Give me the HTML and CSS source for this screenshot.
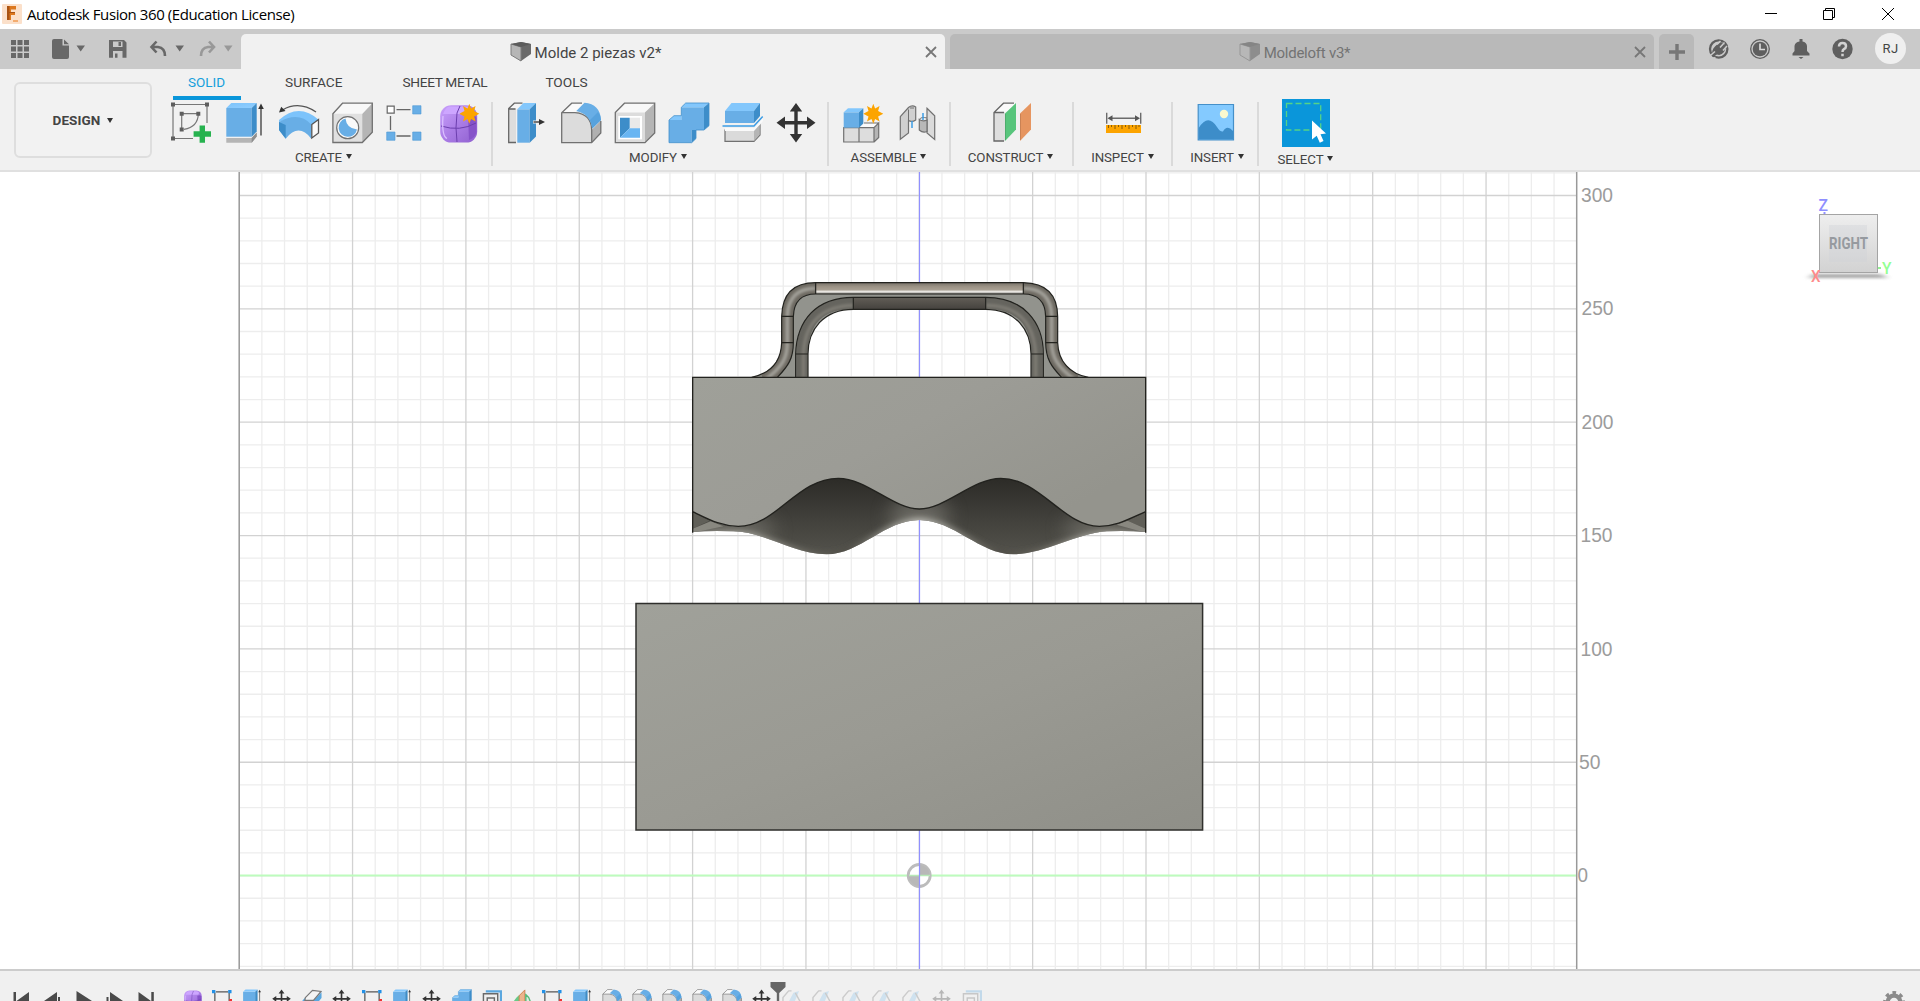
FILE: index.html
```html
<!DOCTYPE html>
<html lang="en">
<head>
<meta charset="utf-8">
<title>Autodesk Fusion 360 (Education License)</title>
<link rel="stylesheet" href="styles.css">
</head>
<body>
<svg class="sprites" width="0" height="0" aria-hidden="true">
  <defs>
    <linearGradient id="blueTop" x1="0" y1="0" x2="1" y2="1"><stop offset="0" stop-color="#7cc3fb"/><stop offset="1" stop-color="#8fceff"/></linearGradient>
    <linearGradient id="purple" x1="0" y1="0" x2="1" y2="1"><stop offset="0" stop-color="#c9a1fb"/><stop offset=".5" stop-color="#ab7de6"/><stop offset="1" stop-color="#8f60cf"/></linearGradient>
    <symbol id="i-sketch" viewBox="0 0 42 42">
      <path d="M3 2.500H37V21M3 2.500V36.500H23" fill="none" stroke="#777" stroke-width="1.200"/><path d="M11.700 27V11.700H28.300Q28 25 14 27.300" fill="none" stroke="#777" stroke-width="1.200"/>
      <path d="M1 .6h4v4h-4zM35 .6h4v4h-4zM1 34.500h4v4h-4zM9.700 9.700h4v4h-4zM26.300 9.700h4v4h-4zM9.700 25.600h4v4h-4z" fill="#5e5e5e"/>
      <path d="M29.600 23.500h5.400v5.800h6v5.400h-6v6h-5.400v-6h-6v-5.400h6z" fill="#27b24f"/>
    </symbol>
    <symbol id="i-extrude" viewBox="0 0 42 42">
      <path d="M2.300 36H27.700L32.700 30.500V34.500L27.700 40.800H2.300z" fill="#b5b5b5"/><path d="M27.700 36 32.700 30.500V34.500L27.700 40.800z" fill="#8e8e8e"/>
      <path d="M2.300 6H27.700V34.700H2.300z" fill="#68aee6"/><path d="M2.300 6 7.300 1H32.700L27.700 6z" fill="url(#blueTop)"/><path d="M27.700 6 32.700 1V29.500L27.700 34.700z" fill="#3d8dc9"/>
      <path d="M37 5V33.500" stroke="#3a3a3a" stroke-width="1.300"/><path d="M37 1.500 39.800 7H34.200z" fill="#333"/>
    </symbol>
    <symbol id="i-revolve" viewBox="0 0 42 42">
      <path d="M1 18Q20.700 0 41 18L33.300 23Q20.700 11 1 20z" fill="#7cc3fb"/><path d="M1 20Q20.700 9 33.300 22.500V36.700Q20.700 20.500 7.700 36.700L1 28z" fill="#68aee6"/><path d="M1 20 7.700 23V36.700L1 28z" fill="#3d8dc9"/>
      <path d="M33.800 22.500 40.500 17.500V31L33.800 36z" fill="#fafafa" stroke="#555" stroke-width="1.300"/>
      <path d="M4.500 8Q20.700-1.500 38 10" fill="none" stroke="#555" stroke-width="1.300"/><path d="M1 10.500 3.200 4.800 7.500 9z" fill="#333"/>
    </symbol>
    <symbol id="i-hole" viewBox="0 0 42 42">
      <path d="M.9 11.700 10.500 1.200H40.300V30.300L30.300 40.500H.9z" fill="#e0e0e0"/><path d="M30.300 11.700 40.300 1.200V30.300L30.300 40.500z" fill="#b5b5b5"/><path d="M1 11.700 10.500 1.200H40.300L30.300 11.700z" fill="#f8f8f8"/><path d="M.9 11.700 10.500 1.200H40.300V30.300L30.300 40.500H.9z" fill="none" stroke="#717171" stroke-width="1.300"/>
      <circle cx="15.700" cy="25.700" r="11" fill="#fafafa" stroke="#717171" stroke-width="1.200"/><path d="M13.500 16.500Q14.500 26.500 25 27.500A9.300 9.300 0 1 1 13.500 16.500z" fill="#68aee6"/>
    </symbol>
    <symbol id="i-pattern" viewBox="0 0 42 42">
      <path d="M10.500 7.700H24.500M4.500 14V28M10.500 34H24.500" stroke="#666" stroke-width="1.300"/><path d="M1.200 4.200h7v7h-7z" fill="#fff" stroke="#666" stroke-width="1.200"/><path d="M26.700 3.700h8.300v8.300h-8.300zM.7 30h8.300v8.300h-8.300zM26.700 30h8.300v8.300h-8.300z" fill="#68aee6" stroke="#4d98d5" stroke-width=".6"/>
    </symbol>
    <symbol id="i-form" viewBox="0 0 42 42">
      <rect x=".2" y="3.200" width="37" height="37.400" rx="11" fill="url(#purple)"/><path d="M9 4.500H27Q34 6 30 12H3Q5 6 9 4.500z" fill="#cda6ff"/><path d="M28 14Q35 11 36.500 16V30Q35 36 29 38Z" fill="#8653c9"/><path d="M1 24Q20 30 36 21M17 11Q15 26 17 40M17 11 20 4" fill="none" stroke="#6c3fae" stroke-width="1"/><path d="M3 14Q1.500 34 7 36.500" fill="none" stroke="#dbbfff" stroke-width="1.300"/>
    </symbol>
    <symbol id="i-star" viewBox="-10 -10 20 20"><path d="M0-10 1.800-5.200 6.300-7.700 4.800-2.700 10 0 4.800 2.700 6.300 7.700 1.800 5.200 0 10-1.800 5.200-6.300 7.700-4.800 2.700-10 0-4.800-2.700-6.300-7.700-1.800-5.200z" fill="#fca400"/></symbol>
    <symbol id="i-press" viewBox="0 0 42 42">
      <path d="M2.700 6.500 8.300 1.200H17L10 7.500V40.500H2.700z" fill="#f5f5f5"/><path d="M2.700 6.500H10V40.500H2.700z" fill="#ddd"/><path d="M16.500 1.200H8.300L2.700 6.500V40.500H10M2.700 7H9.500" fill="none" stroke="#666" stroke-width="1.300"/>
      <path d="M11.300 7.300H23.700V40.700H11.300z" fill="#68aee6"/><path d="M11.300 7.300 17.500 1H30L23.700 7.300z" fill="#83c7fc"/><path d="M23.700 7.300 30 1V34.500L23.700 40.700z" fill="#3d8dc9"/>
      <path d="M27 18.500H36V21.500H27z" fill="#eee"/><path d="M27.500 20H35" stroke="#333" stroke-width="1.300"/><path d="M39 20 33 17V23z" fill="#333"/>
    </symbol>
    <symbol id="i-fillet" viewBox="0 0 42 42">
      <path d="M1.700 10.700 11.700 1.200H24L16 9.500Q31 12 31.700 27.500L41 18V31L31.700 40.600H1.700z" fill="#dcdcdc"/><path d="M1.700 10.700 11.700 1.200H24L16 10z" fill="#fafafa"/><path d="M31.700 28 41 18.500V31L31.700 40.500z" fill="#b0b0b0"/><path d="M22 1.200H11.700L1.700 10.700V40.600H31.700L40.800 31V19M1.700 10.700H15Q31.500 12 31.700 28V40.600" fill="none" stroke="#717171" stroke-width="1.300"/>
      <path d="M16.300 9 24.500.8Q40 2 41 18L32.300 26.500Q30 12 16.300 9z" fill="#68aee6"/><path d="M38 10Q41 14 41 18L32.300 26.500Q31.500 22 30 18z" fill="#57a2dd"/>
    </symbol>
    <symbol id="i-shell" viewBox="0 0 42 42">
      <path d="M1.300 10.500 10.500 1.200H40.700V31L31 40.600H1.300z" fill="#dcdcdc"/><path d="M1.300 10.500 10.500 1.200H40.700L31 10.500z" fill="#f8f8f8"/><path d="M31 10.500 40.700 1.200V31L31 40.600z" fill="#b5b5b5"/><path d="M1.300 10.500 10.500 1.200H40.700V31L31 40.600H1.300z" fill="none" stroke="#717171" stroke-width="1.300"/>
      <path d="M4.300 14H28V37.300H4.300z" fill="#fff"/><path d="M16 15.700H26V26.500H16z" fill="#e9e9e9"/><path d="M6 15.700H15.700V26.300L6 35.700z" fill="#3d8dc9"/><path d="M15.700 26.300H26V35.700H6z" fill="#68b5f2"/>
    </symbol>
    <symbol id="i-combine" viewBox="0 0 42 42">
      <path d="M1 18H13.300V5.300H36V28H23.700V40.700H1z" fill="#68aee6"/><path d="M13.300 5.300 17.700 1H41L36 5.300zM1 18 6 13.700H13.300V18z" fill="#83c7fc"/><path d="M36 5.300 41 1V23.700L36 28zM23.700 28H28V36.500L23.700 40.700z" fill="#3d8dc9"/><path d="M1 18 6 13.700H13.300V5.300L17.700 1H41V23.700L36 28H28V36.500L23.700 40.700H1z" fill="none" stroke="#4390cc" stroke-width=".8"/>
    </symbol>
    <symbol id="i-split" viewBox="0 0 42 42">
      <path d="M3 28H32L38 21.500V33L32 39.300H3z" fill="#dadada" stroke="#717171" stroke-width="1.200"/><path d="M3 26H32L41 16V19L33 29H3z" fill="#fafafa"/><path d="M32 29 37.500 23V33L32 39z" fill="#b5b5b5"/>
      <path d="M3 9H32V21H3z" fill="#68aee6"/><path d="M3 9 9.500 1H38L32 9z" fill="#83c7fc"/><path d="M32 9 38 1V14L32 21z" fill="#3d8dc9"/><path d="M.5 24H32L40.700 14.500" fill="none" stroke="#3d9de5" stroke-width="1.500"/>
    </symbol>
    <symbol id="i-move" viewBox="0 0 42 42"><path d="M20 1 26.200 9.500H21.700V19H31V14.500L39.500 20.700 31 27V22.500H21.700V32H26.200L20 40.500 13.800 32H18.300V22.500H9V27L.5 20.700 9 14.500V19H18.300V9.500H13.800z" fill="#333"/></symbol>
    <symbol id="i-component" viewBox="0 0 42 42">
      <path d="M1.700 25.700H32L36.700 21V35.500L32 40H1.700z" fill="#ddd"/><path d="M17 25.700 22 21H36.700L32 25.700z" fill="#fafafa"/><path d="M32 25.700 36.700 21V35.500L32 40z" fill="#b5b5b5"/><path d="M1.700 25.700H32V40H1.700zM17 25.700V40M32 25.700 36.700 21V35.500L32 40M22 21H36.700" fill="none" stroke="#717171" stroke-width="1.200"/>
      <path d="M1.700 10.300H17V25.700H1.700z" fill="#68aee6"/><path d="M1.700 10.300 6 6.300H21.300L17 10.300z" fill="#83c7fc"/><path d="M17 10.300 21.300 6.300V21.500L17 25.700z" fill="#3d8dc9"/><use href="#i-star" x="21.300" y="1.700" width="20" height="20"/>
    </symbol>
    <symbol id="i-joint" viewBox="0 0 42 42">
      <g stroke="#717171" stroke-width="1.200"><path d="M4.300 14.700 12.500 5.500Q16 2.500 19.700 5V18Q16 20.500 12.500 18.500V31L4.300 37.300z" fill="#d0d0d0"/><path d="M31 6.300 38.700 13.700V37.500L31 31z" fill="#dadada"/><path d="M31 18Q27 20 23.300 17.500V28Q27 31.500 31 29.500z" fill="#b8b8b8"/></g><path d="M12.500 7.500V18.500M23.300 17.500Q25 14.500 31 16M14 6H18" stroke="#717171" fill="none"/><path d="M16 19V26M27 11V18" stroke="#3d9de5" stroke-width="1.500"/>
    </symbol>
    <symbol id="i-plane" viewBox="0 0 42 42">
      <path d="M3 10.500 12.500 1.200H25L14 11.300V39H3z" fill="#fafafa"/><path d="M3 10.500H14V39H3z" fill="#dedede"/><path d="M23 1.200H12.500L3 10.500V39H13M3 10.500H13" fill="none" stroke="#666" stroke-width="1.300"/><path d="M14 11.500 25 1V27.500L14 39z" fill="#58c57c"/><path d="M29 11.500 40 1V27.500L29 39z" fill="#e69560"/><path d="M14.500 12V38M29.500 12V38" stroke="#000" stroke-opacity=".12"/>
    </symbol>
    <symbol id="i-measure" viewBox="0 0 42 42">
      <path d="M4.700 10.700V21.700M38.700 10.700V21.700M7 16.300H36" stroke="#6b6b6b" stroke-width="1.400"/><path d="M5.500 16.300 10.500 13.300V19.300zM38 16.300 33 13.300V19.300z" fill="#555"/><path d="M4 23H39V31H4z" fill="#fca400"/><path d="M6.500 23v3M9.500 23v2M13 23v4M16.500 23v2M20 23v4M23.500 23v2M27 23v4M30.500 23v2M34 23v4M37 23v2" stroke="#7b5207" stroke-width=".9"/>
    </symbol>
    <symbol id="i-image" viewBox="0 0 42 42">
      <path d="M3.200 2.500H38.500V38H3.200z" fill="#84caff" stroke="#4590c9" stroke-width="1.200"/><circle cx="29" cy="12" r="4.200" fill="#fbf9cf"/><path d="M3.700 26Q13 11 22 25Q25 30 28 29.500Q32 22.500 38 29V37.500H3.700z" fill="#3d8dc9"/>
    </symbol>
    <symbol id="i-eraser" viewBox="0 0 42 42"><path d="M1 24 7 18 24 24 41 7V19L22 42H1z" fill="#5aa7df"/><path d="M7 18 22 3 40 5 24 24H6z" fill="#f4f4f4" stroke="#777" stroke-width="2.500"/></symbol>
    <symbol id="i-tsketch" viewBox="0 0 42 42"><path d="M8 6H34M6 8V42M36 8V42" stroke="#555" stroke-width="2.600"/><path d="M0 2h7v7h-7zM34 2h7v7h-7z" fill="#2391e6"/><path d="M36 21h7v7h-7z" fill="#e33"/></symbol>
    <symbol id="i-tshell" viewBox="0 0 42 42"><path d="M8 5H40V42" fill="none" stroke="#5aa7df" stroke-width="5"/><path d="M3 42V10H33V42M11 42V19H26V42" fill="none" stroke="#6a6a6a" stroke-width="3"/></symbol>
    <symbol id="i-tplane" viewBox="0 0 42 42"><path d="M0 42Q1 20 17 12V42z" fill="#68ca88"/><path d="M15 14 27 2V42H15z" fill="#ecb48c" stroke="#cc824f" stroke-width="2"/><path d="M29 12Q41 20 39 42H29z" fill="#dcefe1" stroke="#58b977" stroke-width="3"/></symbol>
    <symbol id="i-tslant" viewBox="0 0 42 42"><path d="M2 42V18L14 4H20" fill="none" stroke="#777" stroke-width="3"/><path d="M6 42 24 8 36 4 20 42z" fill="#69b6ed" fill-opacity=".8"/><path d="M28 8 40 30V42" fill="none" stroke="#777" stroke-width="3"/></symbol>
    <symbol id="i-doc" viewBox="0 0 22 21"><path d="M1 3 11 1 21 3V13L11 20 1 13z" fill="#6a6a6a"/><path d="M1 3 11 6V20L1 14z" fill="#b6b6b6" stroke="#7c7c7c"/><path d="M1 3 11 1 21 3 11 6z" fill="#5c5c5c"/></symbol>
  </defs>
</svg>

<div class="app">
  <header class="titlebar">
    <svg class="logo" width="20" height="20" viewBox="0 0 20 20"><rect width="20" height="20" rx="1" fill="#fbe0ca"/><path d="M5 2H14V5.500H9V8H13V11H9V16H5z" fill="#dc781f"/><path d="M5 2H7.500V16H5zM7.500 8H13V9H7.500z" fill="#a95313"/><path d="M11 16h5v2h-5z" fill="#f3ac70"/></svg>
    <h1 class="title">Autodesk Fusion 360 (Education License)</h1>
    <svg class="window-controls" width="132" height="14" viewBox="0 0 132 14" fill="none" stroke="#000"><path d="M0 6.500H12M58.500 3.500H67.500V12.500H58.500zM60.500 3.500V1.500H69.500V10.500H67.500M117 1 129 13M129 1 117 13"/></svg>
  </header>

  <nav class="tabbar">
    <svg class="quick" width="241" height="40" viewBox="0 0 241 40" fill="#686868">
      <path d="M11 11h5v5h-5zM17.500 11h5v5h-5zM24 11h5v5h-5zM11 17.500h5v5h-5zM17.500 17.500h5v5h-5zM24 17.500h5v5h-5zM11 24h5v5h-5zM17.500 24h5v5h-5zM24 24h5v5h-5z"/>
      <path d="M54 10H62.500V16.500H69V28Q69 30 67 30H54Q52 30 52 28V12Q52 10 54 10zM64 10.500 69 15.300H64zM76.500 16.500H85L80.700 22.500zM175.500 16.500H184L179.700 22.500z"/>
      <path d="M109 11H124L126.500 13.500V28.700H109zM113 12.500V18H122.500V12.500zM113 22V28.700H122.500V22z" fill-rule="evenodd"/><path d="M118.500 13h2.500v4h-2.500zM115 24.500h2.500v4.200h-2.500z"/>
      <path d="M156.500 12.500 151.500 18 156.500 23.500M152 18H158Q165 19 165 27" fill="none" stroke="#686868" stroke-width="2.600"/>
      <g opacity=".5"><path d="M209 12.500 214 18 209 23.500M213.500 18H208Q201 19 201 27" fill="none" stroke="#686868" stroke-width="2.600"/><path d="M224 16.500H232.500L228.200 22.500z"/></g>
    </svg>
    <div class="doc-tab doc-tab--active"><svg class="doc-icon" width="22" height="21"><use href="#i-doc"/></svg><span class="doc-name">Molde 2 piezas v2*</span><svg class="close" width="12" height="12" viewBox="0 0 12 12"><path d="M1 1 11 11M11 1 1 11"/></svg></div>
    <div class="doc-tab doc-tab--idle"><svg class="doc-icon" width="22" height="21"><use href="#i-doc"/></svg><span class="doc-name">Moldeloft v3*</span><svg class="close" width="12" height="12" viewBox="0 0 12 12"><path d="M1 1 11 11M11 1 1 11"/></svg></div>
    <div class="new-tab"><svg width="16" height="16" viewBox="0 0 16 16"><path d="M6.300 0h3.400v6.300H16v3.400H9.700V16H6.300V9.700H0V6.300h6.300z" fill="#777"/></svg></div>
    <svg class="account-icons" width="180" height="40" viewBox="0 0 180 40" fill="#5f5f5f">
      <circle cx="24.700" cy="20" r="8.700" fill="none" stroke="#5f5f5f" stroke-width="2.300"/><path d="M18.500 28Q17 21 21 17.500Q23 15 27 13L30 15 32.500 17 30 23Q27 27 23 25.500z"/><path d="M14 28.500 21 22.500M21.500 28.500 16 31M23 15.500 26.500 12M26 18.500 30.500 13.500M29 21.500 33 17" stroke="#cacaca" stroke-width="1.600" fill="none"/>
      <circle cx="66" cy="20" r="9.300" fill="none" stroke="#5f5f5f" stroke-width="1.300"/><circle cx="66" cy="20" r="7.300"/><path d="M66 14.500V20.500H71" fill="none" stroke="#d8d8d8" stroke-width="1.700"/>
      <path d="M98.500 26.500V24.500L100.500 22V17Q101 13 105.500 12.500V10H108.500V12.500Q112.500 13 113 17V22L115.500 24.500V26.500zM104.500 28H109.500L107 30z"/>
      <circle cx="148.500" cy="20" r="10.200"/><path d="M145 17.500Q145 14 148.500 14T152 17.200Q152 19 149.900 20.200 148.500 21 148.500 23M148.500 24.800V27.300" fill="none" stroke="#d2d2d2" stroke-width="2.500"/>
    </svg>
    <div class="avatar">RJ</div>
  </nav>

  <section class="ribbon">
    <div class="workspace"><button class="design">DESIGN<i class="caret"></i></button></div>
    <div class="ribbon-main">
      <div class="ribbon-tabs"><span class="rtab rtab--on">SOLID</span><span class="rtab">SURFACE</span><span class="rtab rtab--wide">SHEET METAL</span><span class="rtab">TOOLS</span></div>
      <div class="groups">
        <div class="group g-create"><div class="icons"><svg><use href="#i-sketch"/></svg><svg><use href="#i-extrude"/></svg><svg><use href="#i-revolve"/></svg><svg><use href="#i-hole"/></svg><svg><use href="#i-pattern"/></svg><svg viewBox="0 0 42 42"><use href="#i-form"/><use href="#i-star" x="19.300" y="1.700" width="20" height="20"/></svg></div><div class="label">CREATE<i class="caret"></i></div></div>
        <div class="group g-modify"><div class="icons"><svg><use href="#i-press"/></svg><svg><use href="#i-fillet"/></svg><svg><use href="#i-shell"/></svg><svg><use href="#i-combine"/></svg><svg><use href="#i-split"/></svg><svg><use href="#i-move"/></svg></div><div class="label">MODIFY<i class="caret"></i></div></div>
        <div class="group g-assemble"><div class="icons"><svg><use href="#i-component"/></svg><svg><use href="#i-joint"/></svg></div><div class="label">ASSEMBLE<i class="caret"></i></div></div>
        <div class="group g-construct"><div class="icons"><svg><use href="#i-plane"/></svg></div><div class="label">CONSTRUCT<i class="caret"></i></div></div>
        <div class="group g-inspect"><div class="icons"><svg><use href="#i-measure"/></svg></div><div class="label">INSPECT<i class="caret"></i></div></div>
        <div class="group g-insert"><div class="icons"><svg><use href="#i-image"/></svg></div><div class="label">INSERT<i class="caret"></i></div></div>
        <div class="group g-select"><div class="icons"><svg class="select-icon" viewBox="0 0 48 48"><path d="M0 0H48V48H0z" fill="#0a96da"/><path d="M4.500 4.500H38.700V31H4.500z" fill="none" stroke="#55d387" stroke-width="1.300" stroke-dasharray="6 3"/><path d="M30 21.500 44 34.500 38.500 35.300 41.500 42 37.800 43.700 34.700 36.800 30 40.500z" fill="#fff"/></svg></div><div class="label">SELECT<i class="caret"></i></div></div>
      </div>
    </div>
  </section>

  <main class="viewport">
    <svg class="scene" width="1920" height="797" viewBox="0 172 1920 797">
      <defs>
        <linearGradient id="face" x1="0" y1="0" x2="1" y2="1"><stop offset="0" stop-color="#a0a19a"/><stop offset=".5" stop-color="#9a9a93"/><stop offset="1" stop-color="#8f8f88"/></linearGradient>
        <linearGradient id="face2" x1="0" y1="0" x2="1" y2=".6"><stop offset="0" stop-color="#9fa099"/><stop offset=".5" stop-color="#9c9c96"/><stop offset="1" stop-color="#94948d"/></linearGradient>
        <linearGradient id="rail" x1="0" y1="0" x2="0" y2="1"><stop offset="0" stop-color="#79736a"/><stop offset=".35" stop-color="#9b9285"/><stop offset=".62" stop-color="#a89f92"/><stop offset=".8" stop-color="#f0eeea"/><stop offset="1" stop-color="#77756f"/></linearGradient>
        <linearGradient id="inner" x1="0" y1="0" x2="0" y2="1"><stop offset="0" stop-color="#625e57"/><stop offset="1" stop-color="#45423e"/></linearGradient>
        <linearGradient id="wave" x1="0" y1="0" x2="0" y2="1"><stop offset="0" stop-color="#2c2b27"/><stop offset=".55" stop-color="#42413c"/><stop offset="1" stop-color="#53524c"/></linearGradient>
        <linearGradient id="rim" gradientUnits="userSpaceOnUse" x1="38" y1="0" x2="1397" y2="0"><stop offset="0" stop-color="#8d8c84"/><stop offset=".14" stop-color="#a5a49c"/><stop offset=".26" stop-color="#6a685f"/><stop offset=".34" stop-color="#504e46"/><stop offset=".42" stop-color="#8e8d86"/><stop offset=".5" stop-color="#c3c2bb"/><stop offset=".58" stop-color="#8e8d86"/><stop offset=".68" stop-color="#504e46"/><stop offset=".76" stop-color="#6a685f"/><stop offset=".86" stop-color="#a5a49c"/><stop offset="1" stop-color="#8d8c84"/></linearGradient>
        <linearGradient id="cube" x1="0" y1="0" x2="0" y2="1"><stop offset="0" stop-color="#eee"/><stop offset="1" stop-color="#d2d2d2"/></linearGradient>
        <filter id="soft" x="-20%" y="-50%" width="140%" height="200%"><feGaussianBlur stdDeviation="9"/></filter>
        <filter id="glow" x="-60%" y="-80%" width="220%" height="260%"><feGaussianBlur stdDeviation="28"/></filter>
        <filter id="soft2" x="-20%" y="-20%" width="140%" height="140%"><feGaussianBlur stdDeviation="4"/></filter>
        <filter id="shadow" x="-20%" y="-100%" width="140%" height="300%"><feGaussianBlur stdDeviation="3 1.800"/></filter>
        <path id="wavePath" d="M38 725C90 750 125 769 175 769 290 769 350 625 475 625 560 625 640 717 718 717 796 717 880 625 962 625 1080 625 1150 769 1258 769 1310 769 1350 745 1397 725V786Q1340 781 1280 784C1190 790 1090 853 1000 853 900 853 820 750 718 750 615 750 540 853 440 853 340 853 250 784 160 784Q90 781 38 786z"/>
        <clipPath id="waveClip"><use href="#wavePath"/></clipPath>
      </defs>
      <path id="minor" fill="none" stroke="#ededed" stroke-width="1.300"/>
      <path id="major" fill="none" stroke="#d2d2d2" stroke-width="1.300"/>
      <path d="M239.200 172V969M1576.700 172V969" stroke="#999" stroke-width="1.500"/>
      <path d="M240 875.500H1576" stroke="#bdfcbd" stroke-width="2"/>
      <g class="origin"><circle cx="919.200" cy="875.500" r="11" fill="#fff" stroke="#bcbcbc" stroke-width="2.800"/><path d="M919.200 875.500V865A10.500 10.500 0 0 1 929.700 875.500zM919.200 875.500V886A10.500 10.500 0 0 1 908.700 875.500z" fill="#b8b8b8"/><path d="M909 875.500H930" stroke="#b7e9b7" stroke-width="1.500"/></g>
      <path d="M919.500 172V969" stroke="#9090ff" stroke-width="1.200"/>

      <g class="axis-labels">
        <text x="1581" y="202" textLength="32" lengthAdjust="spacingAndGlyphs">300</text>
        <text x="1581.500" y="315.400" textLength="32" lengthAdjust="spacingAndGlyphs">250</text>
        <text x="1581.500" y="428.800" textLength="32" lengthAdjust="spacingAndGlyphs">200</text>
        <text x="1580.500" y="542.200" textLength="32" lengthAdjust="spacingAndGlyphs">150</text>
        <text x="1580.500" y="655.500" textLength="32" lengthAdjust="spacingAndGlyphs">100</text>
        <text x="1579" y="769" textLength="21.500" lengthAdjust="spacingAndGlyphs">50</text>
        <text x="1577.500" y="882.300" textLength="10.500" lengthAdjust="spacingAndGlyphs">0</text>
      </g>

      <g class="mold-bottom"><rect x="636" y="603.500" width="566.600" height="226.500" fill="url(#face)" stroke="#2f2f2c" stroke-width="1.500"/></g>

      <g class="mold-top" transform="translate(680 270) scale(.33333)">
        <path d="M215 322C270 310 303 275 305 218V140Q307 38 407 38H1030Q1132 40 1133 140V218C1135 275 1170 312 1225 322H1053V252C1053 180 1007 118 917 118H520C430 118 384 180 384 252V322z" fill="#92938d"/>
        <g fill="none" stroke-width="34">
          <path d="M254 330C310 290 322 260 322 218V140Q324 55 407 55M1030 55Q1114 55 1115 140V218C1116 260 1130 290 1186 330" stroke="#6d6961"/>
          <path d="M254 330C310 290 322 260 322 218V140Q324 55 407 55M1030 55Q1114 55 1115 140V218C1116 260 1130 290 1186 330" stroke="#aaa9a2" stroke-width="10" filter="url(#soft2)"/>
          <path d="M366 322V252Q370 100 520 100M917 100Q1068 100 1071 252V322" stroke="#65645e"/>
          <path d="M370 322V252Q377 110 520 106M917 106Q1058 106 1067 252V322" stroke="#89867e" stroke-width="7" filter="url(#soft2)"/>
        </g>
        <path d="M407 38H1030V72H407z" fill="url(#rail)"/><path d="M520 82H917V118H520z" fill="url(#inner)"/>
        <g fill="none" stroke="#23231f" stroke-width="3.600">
          <path d="M215 322C270 310 303 275 305 218V140Q307 38 407 38H1030Q1132 40 1133 140V218C1135 275 1170 312 1225 322"/>
          <path d="M292 322C325 288 340 265 340 218V140Q342 72 407 72H1030Q1096 72 1097 140V218C1098 265 1112 288 1145 322"/>
          <path d="M347 322V252C350 150 410 82 520 82H917C1030 82 1090 155 1090 252V322"/>
          <path d="M384 322V252C384 180 430 118 520 118H917C1007 118 1053 180 1053 252V322"/>
          <path d="M407 38V72M1030 38V72M520 82V118M917 82V118M305 139H340M305 218H340M1097 139H1133M1097 218H1133M347 252H384M1053 252H1090"/>
        </g>
        <path d="M38 322H1397V725C1350 745 1310 769 1258 769 1150 769 1080 625 962 625 880 625 796 717 718 717 640 717 560 625 475 625 350 625 290 769 175 769 125 769 90 750 38 725z" fill="url(#face2)"/>
        <use href="#wavePath" fill="url(#wave)"/>
        <g clip-path="url(#waveClip)">
          <ellipse cx="718" cy="740" rx="90" ry="60" fill="#85847d" opacity=".6" filter="url(#glow)"/>
          <ellipse cx="175" cy="780" rx="110" ry="40" fill="#85847d" opacity=".6" filter="url(#glow)"/><ellipse cx="1260" cy="780" rx="110" ry="40" fill="#85847d" opacity=".6" filter="url(#glow)"/>
          <path d="M1397 796Q1340 791 1280 794C1190 800 1090 861 1000 861 900 861 820 757 718 757 615 757 540 861 440 861 340 861 250 794 160 794Q90 791 38 796" fill="none" stroke="url(#rim)" stroke-width="23" filter="url(#soft)"/>
          <path d="M38 725 88 752 38 776zM1397 725 1343 752 1397 776z" fill="#605f58"/><path d="M38 776 92 754 130 769 38 788zM1397 776 1343 752 1310 764 1397 788z" fill="#898880"/>
        </g>
        <path d="M38 725C90 750 125 769 175 769 290 769 350 625 475 625 560 625 640 717 718 717 796 717 880 625 962 625 1080 625 1150 769 1258 769 1310 769 1350 745 1397 725M38 322H1397M38 320V788M1397 320V788" fill="none" stroke="#22221e" stroke-width="4"/>
      </g>

      <g class="viewcube">
        <path d="M1814 274H1880L1888 278H1808z" fill="#777" opacity=".65" filter="url(#shadow)"/>
        <rect x="1819.500" y="214.500" width="58" height="58" fill="url(#cube)" stroke="#a4a4a4"/><rect x="1829" y="225" width="38" height="37" fill="#cfd3d8" opacity=".4"/>
        <text class="cube-face" x="1829" y="249" textLength="39" lengthAdjust="spacingAndGlyphs">RIGHT</text>
        <path d="M1824.500 212V214" stroke="#9292ff" stroke-width="2"/><path d="M1878 268H1881" stroke="#94f594" stroke-width="2"/>
        <text class="axis axis-z" x="1818.500" y="211" textLength="9.500" lengthAdjust="spacingAndGlyphs">Z</text><text class="axis axis-x" x="1811" y="282" textLength="9.500" lengthAdjust="spacingAndGlyphs">X</text><text class="axis axis-y" x="1882" y="274" textLength="9.500" lengthAdjust="spacingAndGlyphs">Y</text>
      </g>
    </svg>
  </main>

  <footer class="timeline">
    <svg class="playback" width="177" height="30" viewBox="0 0 177 30" fill="#4a4a4a"><path d="M13.500 21h2.500v18h-2.500zM29 21V39L16.500 30zM57 21V39L44 30zM58 26h2v13h-2zM76.500 20 92 30 76.500 40zM106.500 26h2v13h-2zM110 21 123 30 110 39zM138.500 21 151 30 138.500 39zM151.300 21h2.500v18h-2.500z"/></svg>
    <div class="history">
      <svg class="history-form"><use href="#i-form"/></svg><svg><use href="#i-tsketch"/></svg><svg><use href="#i-extrude"/></svg><svg><use href="#i-move"/></svg><svg><use href="#i-eraser"/></svg><svg><use href="#i-move"/></svg><svg><use href="#i-tsketch"/></svg><svg><use href="#i-extrude"/></svg><svg><use href="#i-move"/></svg><svg><use href="#i-combine"/></svg><svg><use href="#i-tshell"/></svg><svg><use href="#i-tplane"/></svg><svg><use href="#i-tsketch"/></svg><svg><use href="#i-extrude"/></svg><svg><use href="#i-fillet"/></svg><svg><use href="#i-fillet"/></svg><svg><use href="#i-fillet"/></svg><svg><use href="#i-fillet"/></svg><svg><use href="#i-fillet"/></svg><svg><use href="#i-move"/></svg>
      <div class="future"><svg><use href="#i-tslant"/></svg><svg><use href="#i-tslant"/></svg><svg><use href="#i-tslant"/></svg><svg><use href="#i-tslant"/></svg><svg><use href="#i-tslant"/></svg><svg><use href="#i-move"/></svg><svg><use href="#i-tshell"/></svg></div>
      <svg class="marker" viewBox="0 0 16 20"><path d="M.5 0H15.500V5L9.200 11V20H6.800V11L.5 5z" fill="#666"/></svg>
    </div>
    <svg class="gear" width="24" height="24" viewBox="-12 -12 24 24"><circle r="6.300" fill="none" stroke="#8b8b8b" stroke-width="4.200"/><circle r="9.300" fill="none" stroke="#8b8b8b" stroke-width="3.200" stroke-dasharray="3.650 3.650" stroke-dashoffset="1.825"/></svg>
  </footer>
</div>
<script src="grid.js"></script>
</body>
</html>
```
FILE: styles.css
```css
* { box-sizing: border-box; }
body { margin: 0; background: #fff; font-family: Roboto, "Liberation Sans", sans-serif; color: #444; }
.sprites { position: absolute; }
.app { width: 1920px; height: 1001px; display: flex; flex-direction: column; overflow: hidden; }

.titlebar { height: 29px; flex: none; display: flex; align-items: center; padding: 0 26px 1px 2px; }
.title { margin: 0 auto 0 5px; font: 400 15px/28px "Open Sans", "Noto Sans", sans-serif; letter-spacing: -.42px; color: #000; white-space: nowrap; }
.window-controls { display: block; margin-right: -3px; }

.tabbar { height: 40px; flex: none; display: flex; align-items: flex-end; background: #cacaca; }
.quick, .account-icons { flex: none; display: block; }
.doc-tab { width: 704px; height: 35px; margin-right: 5px; border-radius: 5px 5px 0 0; display: flex; align-items: center; padding: 0 8px 0 5px; font-size: 15px; }
.doc-tab--active { background: #f1f1f1; }
.doc-tab--idle { background: #b9b9b9; color: #737373; }
.doc-icon { margin-left: auto; flex: none; }
.doc-name { margin: 2px auto 0 3px; white-space: nowrap; }
.doc-tab--idle .doc-name { letter-spacing: -.25px; }
.doc-tab--idle .doc-icon { opacity: .55; }
.close { flex: none; }
.close path { fill: none; stroke: #777; stroke-width: 1.8; }
.new-tab { width: 35px; height: 35px; border-radius: 5px 5px 0 0; background: #b9b9b9; display: flex; align-items: center; justify-content: center; }
.avatar { width: 31px; height: 31px; margin: 0 0 5px 1px; border-radius: 50%; background: #efefef; font-size: 13px; line-height: 31px; text-align: center; letter-spacing: .5px; }

.ribbon { height: 103px; flex: none; display: flex; background: #f1f1f1; border-bottom: 2px solid #e0e0e0; }
.workspace { width: 160px; padding: 13px 8px 0 14px; }
.design { display: flex; align-items: center; justify-content: center; width: 138px; height: 76px; border: 2px solid #dedede; border-radius: 6px; background: #f2f2f2; font: 700 13.5px Roboto, sans-serif; letter-spacing: .1px; color: #444; padding: 0; }
.caret { display: inline-block; margin-left: 4px; border: 3.5px solid transparent; border-top: 5px solid #333; border-bottom: 0; vertical-align: 3px; }
.design .caret { margin-left: 7px; }
.ribbon-tabs { height: 31px; display: flex; padding-left: 13px; }
.rtab { padding: 5px 16px 0 15px; margin-right: 29px; font-size: 13.7px; line-height: 17px; height: 31px; white-space: nowrap; }
.rtab--wide { letter-spacing: -.35px; margin-right: 27px; }
.rtab--on { font-size: 13.5px; color: #159fdc; border-bottom: 4px solid #0a96da; }
.groups { display: flex; height: 70px; }
.group { height: 64px; margin-top: 2px; border-right: 2px solid #dadada; display: flex; flex-direction: column; align-items: center; }
.icons { display: flex; height: 44px; align-items: flex-start; }
.icons svg { width: 42px; height: 42px; margin: 0 6px; display: block; flex: none; overflow: visible; }
.icons .select-icon { width: 48px; height: 48px; margin: -3px 0 0; }
.label { margin-top: 6px; font-size: 13.3px; line-height: 16px; white-space: nowrap; letter-spacing: -.1px; }
.g-create { width: 333px; } .g-create .label { margin-left: -4px; }
.g-modify { width: 336px; padding-left: 4px; } .g-modify .label { margin-left: -8px; }
.g-assemble { width: 122px; padding-left: 2px; } .g-assemble .label { margin-left: -3px; }
.g-construct { width: 123px; padding-left: 1px; } .g-construct .label { margin-left: -3px; }
.g-inspect { width: 99px; }
.g-insert { width: 86px; padding-left: 1px; } .g-insert .label { margin-left: 3px; }
.g-select { width: 94px; border: 0; } .g-select .label { margin-left: -1px; }

.viewport { height: 797px; flex: none; background: #fff; }
.scene { display: block; }
.axis-labels { font: 20px "Liberation Sans", sans-serif; fill: #9c9c9c; }
.cube-face { font: 700 16.5px Roboto, sans-serif; fill: #969a9f; }
.axis { font: 500 17px Roboto, sans-serif; }
.axis-z { fill: #8f8fff; } .axis-x { fill: #ff8a8a; } .axis-y { fill: #93ff93; }

.timeline { height: 32px; flex: none; display: flex; background: #f0f0f0; border-top: 2px solid #ccc; overflow: hidden; }
.playback { flex: none; }
.history { display: flex; position: relative; padding-top: 18px; }
.history svg { width: 20px; height: 20px; margin: 0 5px; flex: none; }
.history .history-form { margin: 0 3px 0 7px; }
.future { display: flex; opacity: .3; }
.history .marker { position: absolute; left: 593px; top: 11px; width: 16px; height: 20px; margin: 0; }
.gear { margin: 19px 14px 0 auto; flex: none; }
```
FILE: grid.js
```js
// Ground grid: 10 mm minor lines, 50 mm major lines, centred on the origin.
(function () {
  const ox = 919.3, oy = 875.6, step = 22.67;
  let minor = '', major = '';
  for (let i = -29; i <= 28; i++) {
    const d = `M${ox + i * step} 172V969`;
    if (i % 5) minor += d; else major += d;
  }
  for (let i = -4; i <= 31; i++) {
    const d = `M240 ${oy - i * step}H1576.5`;
    if (i % 5) minor += d; else major += d;
  }
  document.getElementById('minor').setAttribute('d', minor);
  document.getElementById('major').setAttribute('d', major);
})();
```
